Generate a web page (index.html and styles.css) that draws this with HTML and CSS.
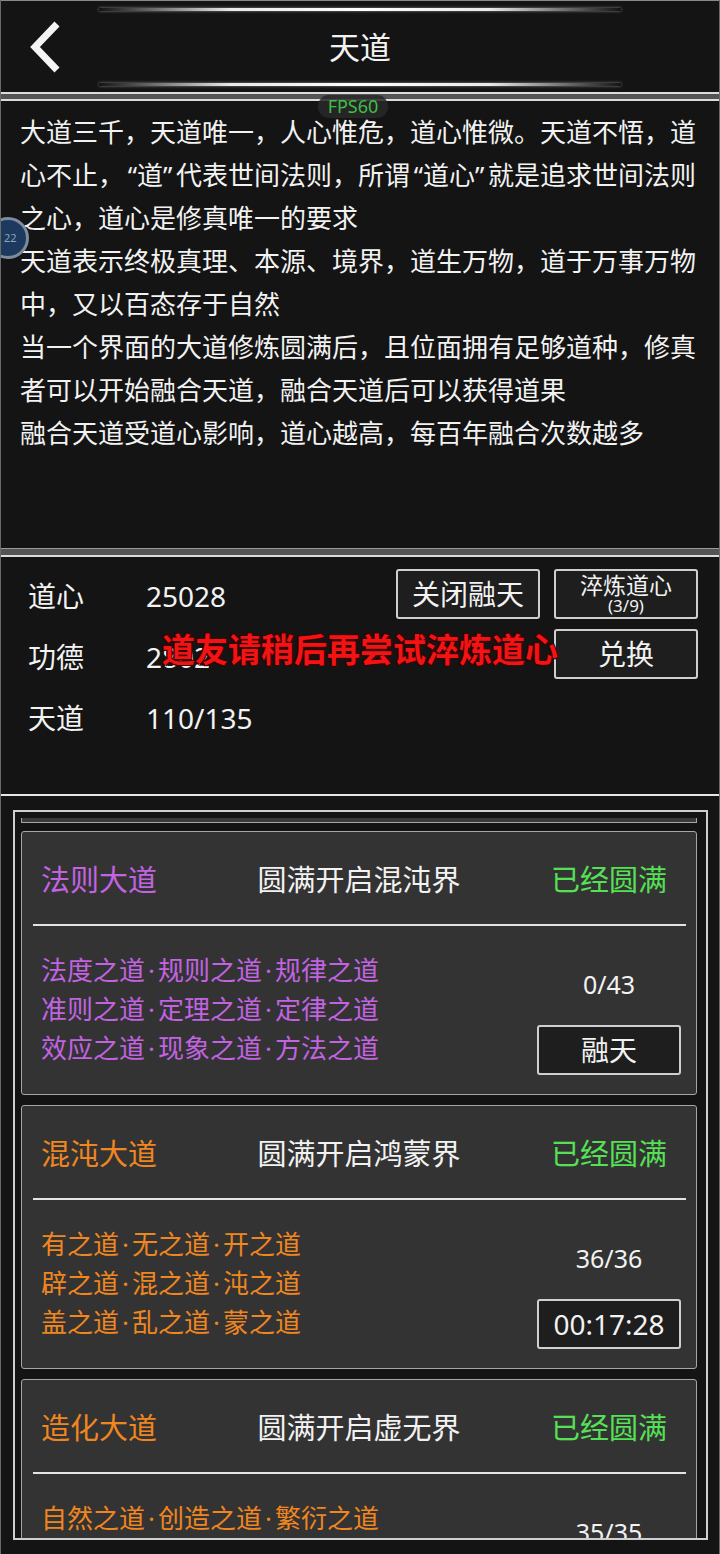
FILE: index.html
```html
<!DOCTYPE html>
<html lang="zh-CN">
<head>
    <meta charset="UTF-8">
    <meta name="viewport" content="width=device-width, initial-scale=1.0">
    <title>天道</title>
    <link rel="stylesheet" href="styles.css">
</head>
<body>
    <div class="screen">
        <!-- Title bar -->
        <header class="topbar">
            <span class="glow"></span>
            <div class="topbar-row">
                <button class="back" aria-label="返回">
                    <svg width="40" height="56" viewBox="0 0 40 56">
                        <polyline points="30,5 8,28 30,51" fill="none" stroke="#f4f4f4" stroke-width="7" stroke-linejoin="miter"/>
                    </svg>
                </button>
                <h1>天道</h1>
                <span></span>
            </div>
            <span class="glow"></span>
        </header>

        <div class="sep"></div>

        <!-- Intro text -->
        <section class="intro">
            <p>大道三千，天道唯一，人心惟危，道心惟微。天道不悟，道<br>心不止，<span class="q ql">“</span>道<span class="q">”</span>代表世间法则，所谓<span class="q ql">“</span>道心<span class="q">”</span>就是追求世间法则<br>之心，道心是修真唯一的要求</p>
            <p>天道表示终极真理、本源、境界，道生万物，道于万事万物<br>中，又以百态存于自然</p>
            <p>当一个界面的大道修炼圆满后，且位面拥有足够道种，修真<br>者可以开始融合天道，融合天道后可以获得道果</p>
            <p>融合天道受道心影响，道心越高，每百年融合次数越多</p>
        </section>

        <div class="sep sep-thin"></div>

        <!-- Stats -->
        <section class="stats">
            <dl class="stat-list">
                <div class="stat"><dt>道心</dt><dd>25028</dd></div>
                <div class="stat"><dt>功德</dt><dd>2802</dd></div>
                <div class="stat"><dt>天道</dt><dd>110/135</dd></div>
            </dl>
            <div class="stat-actions">
                <button class="btn">关闭融天</button>
                <button class="btn btn-small">淬炼道心<small>(3/9)</small></button>
                <button class="btn btn-col2">兑换</button>
            </div>
        </section>

        <!-- Dao list -->
        <section class="dao-panel">
            <div class="dao-frame">
                <div class="card-tail"></div>

                <article class="card">
                    <div class="card-head">
                        <span class="dao-name purple">法则大道</span>
                        <span class="dao-goal">圆满开启混沌界</span>
                        <span class="dao-state">已经圆满</span>
                    </div>
                    <div class="card-rule"></div>
                    <div class="card-body">
                        <div class="dao-list purple">
                            <div>法度之道<i>·</i>规则之道<i>·</i>规律之道</div>
                            <div>准则之道<i>·</i>定理之道<i>·</i>定律之道</div>
                            <div>效应之道<i>·</i>现象之道<i>·</i>方法之道</div>
                        </div>
                        <div class="dao-side">
                            <div class="count">0/43</div>
                            <button class="btn">融天</button>
                        </div>
                    </div>
                </article>

                <article class="card">
                    <div class="card-head">
                        <span class="dao-name orange">混沌大道</span>
                        <span class="dao-goal">圆满开启鸿蒙界</span>
                        <span class="dao-state">已经圆满</span>
                    </div>
                    <div class="card-rule"></div>
                    <div class="card-body">
                        <div class="dao-list orange">
                            <div>有之道<i>·</i>无之道<i>·</i>开之道</div>
                            <div>辟之道<i>·</i>混之道<i>·</i>沌之道</div>
                            <div>盖之道<i>·</i>乱之道<i>·</i>蒙之道</div>
                        </div>
                        <div class="dao-side">
                            <div class="count">36/36</div>
                            <button class="btn">00:17:28</button>
                        </div>
                    </div>
                </article>

                <article class="card">
                    <div class="card-head">
                        <span class="dao-name orange">造化大道</span>
                        <span class="dao-goal">圆满开启虚无界</span>
                        <span class="dao-state">已经圆满</span>
                    </div>
                    <div class="card-rule"></div>
                    <div class="card-body">
                        <div class="dao-list orange">
                            <div>自然之道<i>·</i>创造之道<i>·</i>繁衍之道</div>
                        </div>
                        <div class="dao-side">
                            <div class="count">35/35</div>
                        </div>
                    </div>
                </article>
            </div>
        </section>

        <!-- Overlays -->
        <div class="fps">FPS60</div>
        <div class="float-ball">22</div>
        <div class="toast">道友请稍后再尝试淬炼道心</div>
    </div>
</body>
</html>
```

FILE: styles.css
```css
body {
    margin: 0;
    background-color: #101010;
}
.screen {
    position: relative;
    width: 720px;
    height: 1554px;
    overflow: hidden;
    box-sizing: border-box;
    background-color: #141414;
    border-left: 1px solid #6a6a6a;
    border-right: 1px solid #6a6a6a;
    font-family: "Noto Sans", "Noto Sans CJK SC", sans-serif;
    color: #f2f2f2;
}

/* Title bar */
.topbar {
    height: 92px;
    box-sizing: border-box;
    border-top: 1px solid #8a8a8a;
    padding: 7px 0 6px;
    display: flex;
    flex-direction: column;
}
.glow {
    display: block;
    height: 3px;
    margin: 0 98px;
    background: linear-gradient(90deg, rgba(255,255,255,0), rgba(255,255,255,0.9) 25%, #fff 50%, rgba(255,255,255,0.9) 75%, rgba(255,255,255,0));
    box-shadow: 0 0 3px rgba(255,255,255,0.5);
}
.topbar-row {
    flex: 1;
    display: grid;
    grid-template-columns: 90px 1fr 90px;
    align-items: center;
}
.back {
    background: none;
    border: none;
    padding: 0 0 0 26px;
    display: flex;
    align-items: center;
    cursor: pointer;
}
.topbar h1 {
    margin: 0;
    text-align: center;
    font-size: 31px;
    font-weight: normal;
    line-height: 40px;
}

/* Separators */
.sep {
    height: 5px;
    background-color: #545454;
    border-top: 2px solid #dcdcdc;
    border-bottom: 2px solid #dcdcdc;
}
.sep-thin {
    height: 6px;
    border-top: 1px solid #9a9a9a;
}

/* Intro */
.intro {
    height: 447px;
    box-sizing: border-box;
    padding: 10px 20px 0 19px;
    font-size: 26px;
    line-height: 43px;
}
.intro p {
    margin: 0;
    white-space: nowrap;
}
.q {
    display: inline-block;
    width: 0.5em;
    text-align: left;
}
.q.ql {
    text-align: right;
}

/* Stats */
.stats {
    height: 239px;
    box-sizing: border-box;
    padding: 9px 21px 0 27px;
    display: flex;
    justify-content: space-between;
    border-bottom: 2px solid #e6e6e6;
}
.stat-list {
    margin: 0;
}
.stat {
    display: flex;
    font-size: 28px;
    line-height: 61px;
}
.stat dt {
    width: 118px;
}
.stat dd {
    margin: 0;
}
.stat-actions {
    margin-top: 3px;
    display: grid;
    grid-template-columns: 144px 144px;
    grid-auto-rows: 50px;
    column-gap: 14px;
    row-gap: 10px;
    align-content: start;
}
.btn {
    box-sizing: border-box;
    height: 50px;
    width: 144px;
    padding: 0;
    background-color: #1e1e1e;
    border: 2px solid #cfcfcf;
    border-radius: 3px;
    color: #f2f2f2;
    font-family: "Noto Sans", "Noto Sans CJK SC", sans-serif;
    font-size: 28px;
    line-height: 1;
    cursor: pointer;
}
.btn-small {
    font-size: 23px;
    display: flex;
    flex-direction: column;
    align-items: center;
    justify-content: center;
    line-height: 23px;
    padding-bottom: 1px;
}
.btn-small small {
    font-size: 17px;
    line-height: 17px;
}
.btn-col2 {
    grid-column: 2;
}

/* Dao list */
.dao-panel {
    height: 758px;
    box-sizing: border-box;
    padding: 14px 11px 0 12px;
}
.dao-frame {
    height: 730px;
    box-sizing: border-box;
    border: 2px solid #cfcfcf;
    padding: 6px 9px 0 6px;
    overflow: hidden;
}
.card-tail {
    height: 5px;
    box-sizing: border-box;
    background-color: #3a3a3a;
    border: 1px solid #a6a6a6;
    border-top: none;
    margin-bottom: 8px;
}
.card {
    height: 264px;
    box-sizing: border-box;
    margin-bottom: 10px;
    background-color: #333;
    border: 1px solid #a6a6a6;
    border-radius: 3px;
}
.card-head {
    height: 92px;
    display: grid;
    grid-template-columns: 1fr auto 1fr;
    align-items: center;
    padding: 0 24px;
    font-size: 29px;
}
.dao-name {
    margin-left: -5px;
}
.dao-goal {
    color: #f2f2f2;
}
.dao-state {
    justify-self: end;
    margin-right: 5px;
    color: #55e055;
}
.card-rule {
    height: 2px;
    margin: 0 10px 0 11px;
    background-color: #e4e4e4;
}
.card-body {
    display: flex;
    justify-content: space-between;
    padding: 0 15px 0 19px;
}
.dao-list {
    padding-top: 25px;
    font-size: 26px;
    line-height: 39px;
}
.dao-list i {
    font-style: normal;
    display: inline-block;
    width: 0.5em;
    text-align: center;
}
.dao-side {
    width: 144px;
    padding-top: 40px;
    text-align: center;
}
.count {
    font-size: 25px;
    line-height: 36px;
    margin-bottom: 23px;
}
.purple {
    color: #c263e2;
}
.orange {
    color: #f0861f;
}

/* Overlays */
.fps {
    position: absolute;
    top: 95px;
    left: 317px;
    width: 70px;
    height: 23px;
    border-radius: 11px;
    background-color: rgba(40, 40, 40, 0.85);
    color: #3fbf46;
    font-size: 18px;
    line-height: 23px;
    text-align: center;
}
.float-ball {
    position: absolute;
    top: 217px;
    left: -14px;
    width: 36px;
    height: 36px;
    border-radius: 50%;
    border: 3px solid #7d8b9c;
    background-color: #1d3a5e;
    color: #8ea2ba;
    font-size: 11px;
    line-height: 36px;
    text-indent: 14px;
}
.toast {
    position: absolute;
    top: 627px;
    left: 0;
    right: 0;
    text-align: center;
    font-family: "Noto Sans CJK SC", sans-serif;
    font-size: 33px;
    font-weight: bold;
    line-height: 42px;
    color: #f21414;
    text-shadow: -1px -1px 0 #3a0000, 1px -1px 0 #3a0000, -1px 1px 0 #3a0000, 1px 1px 0 #3a0000;
}
```
